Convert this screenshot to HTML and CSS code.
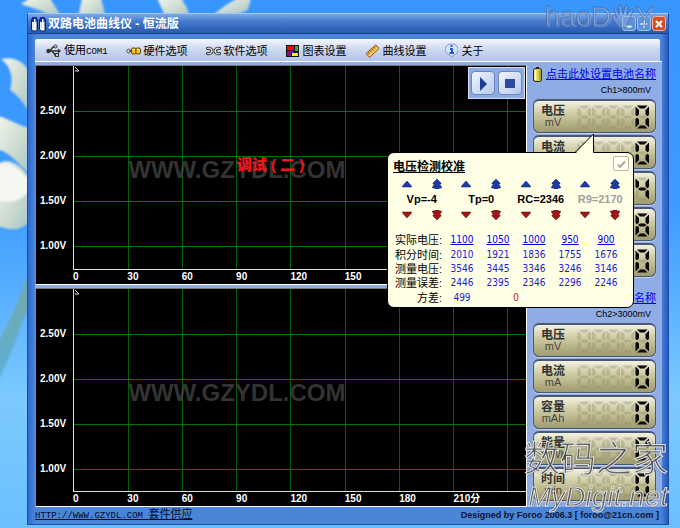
FILE: index.html
```html
<!DOCTYPE html>
<html lang="zh-CN">
<head>
<meta charset="utf-8">
<title>双路电池曲线仪 - 恒流版</title>
<link rel="stylesheet" href="styles.css">
</head>
<body>
<svg width="0" height="0" class="defs" aria-hidden="true">
  <defs>
    <path id="sa" d="M2 0.500H12.500L9.500 3.500H5Z"/>
    <path id="sb" d="M14 1.500V10L12.500 11.300L10.500 9.500V5Z"/>
    <path id="sc" d="M14 22.500V14L12.500 12.700L10.500 14.500V19Z"/>
    <path id="sd" d="M2 23.500H12.500L9.500 20.500H5Z"/>
    <path id="se" d="M0.500 22.500V14L2 12.700L4 14.500V19Z"/>
    <path id="sf" d="M0.500 1.500V10L2 11.300L4 9.500V5Z"/>
    <path id="sg" d="M3 12L5 10.500H9.500L11.500 12L9.500 13.500H5Z"/>
    <g id="d0"><use href="#sa"/><use href="#sb"/><use href="#sc"/><use href="#sd"/><use href="#se"/><use href="#sf"/></g>
    <g id="d4"><use href="#sf"/><use href="#sg"/><use href="#sb"/><use href="#sc"/></g>
    <g id="d8"><use href="#d0"/><use href="#sg"/></g>
    <g id="ghost" class="ghost"><use href="#d8"/><use href="#d8" x="14.500"/><use href="#d8" x="29"/><use href="#d8" x="43.500"/><use href="#d8" x="58"/></g>
    <path id="up1" d="M5 2L9.500 7V8H0.500V7Z"/>
    <path id="up2" d="M5 0L9 4V5H7.500L9.500 8V9H7V10H3V9H0.500V8L2.500 5H1V4Z"/>
    <linearGradient id="stem" x1="0" y1="0" x2="0" y2="1"><stop offset="0" stop-color="#7fa98c"/><stop offset="1" stop-color="#55a9d0"/></linearGradient>
    <linearGradient id="petal" x1="0" y1="0" x2="1" y2="1"><stop offset="0" stop-color="#f2f5ea"/><stop offset=".6" stop-color="#c9d9d0"/><stop offset="1" stop-color="#a4c3c8"/></linearGradient>
    <filter id="soft"><feGaussianBlur stdDeviation="1"/></filter>
  </defs>
</svg>

<div class="desktop">
  <svg class="wallpaper" viewBox="0 0 680 528" preserveAspectRatio="xMinYMin slice" aria-hidden="true">
    <g filter="url(#soft)">
      <path fill="url(#stem)" opacity=".8" d="M30 268C20 300 8 325 -4 345V385C12 355 22 320 32 300Z"/>
      <g fill="url(#petal)">
        <path d="M21 4L30 -2H50L61 16H50C42 10 32 8 21 4Z"/>
        <path d="M82 -2H101L106 18H78Z"/>
        <path d="M157 -2H181L187 8L190 18H166Z"/>
        <path d="M214 14L226 5L238 -2H251L248 10L238 14Z"/>
        <path d="M1 59C14 56 25 62 29 72V112C22 100 16 94 10 90C14 76 10 66 1 59Z"/>
        <path d="M-2 116C8 118 18 126 30 128V174C20 166 8 150 -2 150Z"/>
        <path d="M-2 164C8 156 22 166 30 178V222C18 232 8 230 -2 226Z"/>
      </g>
      <path fill="#f5f7f2" d="M-2 166C8 160 20 170 29 180V190C22 202 8 204 -2 200Z"/>
    </g>
  </svg>

  <main class="window">
    <header class="titlebar">
      <svg width="16" height="16" viewBox="0 0 16 16" aria-hidden="true">
        <rect x=".5" y="2" width="6" height="13" rx="2" fill="#dfe9f2" stroke="#0b1d72"/><rect x="1" y="1" width="5" height="5" rx="1" fill="#12289c"/><path d="M3 3h1.500v11H3z" fill="#fff"/><path d="M5 6h1v8H5z" fill="#8b9cab"/>
        <rect x="8.500" y="2" width="6" height="13" rx="2" fill="#dfe9f2" stroke="#0b1d72"/><rect x="9" y="1" width="5" height="5" rx="1" fill="#12289c"/><path d="M11 3h1.500v11H11z" fill="#fff"/><path d="M13 6h1v8h-1z" fill="#8b9cab"/>
      </svg>
      <h1>双路电池曲线仪 - 恒流版</h1>
      <div class="controls">
        <button type="button" aria-label="_"><svg viewBox="0 0 14 14"><path d="M3 10H10" stroke="#fff" stroke-width="2"/></svg></button>
        <button type="button" aria-label="+"><svg viewBox="0 0 14 14"><path d="M3 7H11M7 3V11" stroke="#fff" stroke-width="2"/></svg></button>
        <button type="button" class="close" aria-label="×"><svg viewBox="0 0 14 14"><path d="M3.500 3.500L10.500 10.500M10.500 3.500L3.500 10.500" stroke="#fff" stroke-width="2.200"/></svg></button>
      </div>
    </header>

    <nav class="menu">
      <button type="button"><svg width="15" height="14" viewBox="0 0 15 14"><g fill="none" stroke="#333" stroke-width="1.300"><path d="M2 7H13M4 7L7 3H9M6 7L9 11H11"/></g><circle cx="2.500" cy="7" r="2.200" fill="#333"/><circle cx="9.500" cy="2.500" r="1.500" fill="#ccc" stroke="#333"/><rect x="9.500" y="9.500" width="3" height="3" fill="#ccc" stroke="#333"/><path d="M12 4.500L15 7L12 9.500Z" fill="#333"/></svg><span>使用<span class="mono">COM1</span></span></button>
      <button type="button"><svg width="15" height="14" viewBox="0 0 15 14"><path d="M4.500 7C4.500 4.500 .8 4.500 .8 7C.8 9.500 4.500 9.500 4.500 7Z" fill="#ddd" stroke="#444"/><path d="M3.500 7H6" stroke="#444" stroke-width="2"/><rect x="5.500" y="4" width="4.500" height="6" rx="1.500" fill="#ffc21a" stroke="#5a4300"/><rect x="10" y="4" width="4.500" height="6" rx="1.500" fill="#ffc21a" stroke="#5a4300"/><path d="M7 5.500H9M11 5.500H13" stroke="#fff29a"/></svg>硬件选项</button>
      <button type="button"><svg width="15" height="14" viewBox="0 0 15 14"><g fill="none" stroke-linecap="round"><path d="M1.500 4.500C4.500 3.500 6 5.500 5.500 7C6 8.500 4.500 10.500 1.500 9.500M13.500 4.500C10.500 3.500 9 5.500 9.500 7C9 8.500 10.500 10.500 13.500 9.500M5 7H10" stroke="#333" stroke-width="3"/><path d="M1.500 4.500C4.500 3.500 6 5.500 5.500 7C6 8.500 4.500 10.500 1.500 9.500M13.500 4.500C10.500 3.500 9 5.500 9.500 7C9 8.500 10.500 10.500 13.500 9.500M5 7H10" stroke="#e4e4e4" stroke-width="1.200"/></g></svg>软件选项</button>
      <button type="button" class="icon-s"><svg width="13" height="14" viewBox="0 0 13 14"><path fill="#111" d="M0 1H13V13H0Z"/><path fill="#f00" d="M1 2H8V6H1Z"/><path fill="#2b2" d="M9 2H12V7H9Z"/><path fill="#817" d="M1 7H5V12H1Z"/><path fill="#fe1" d="M6 9H12V12H6Z"/><path fill="#22f" d="M5 6H8V9H5Z"/></svg>图表设置</button>
      <button type="button"><svg width="15" height="14" viewBox="0 0 15 14"><path d="M1 9.500L11 .8L14 4.500L4.500 13.500Z" fill="#efb44c" stroke="#94600f"/><path d="M3 8L4.500 10M5 6.200L6 7.800M7 4.500L8.500 6.500M9 2.800L10 4.300" stroke="#94600f"/><path d="M4 12L13 4" stroke="#ffe29a"/></svg>曲线设置</button>
      <button type="button" class="icon-s"><svg width="13" height="15" viewBox="0 0 13 15"><path d="M6.500 1A5.500 5.500 0 0 1 8.500 12L6.500 14.500L5 12A5.500 5.500 0 0 1 6.500 1Z" fill="#cfe3fb" stroke="#7e9cc9"/><path d="M5 6H7V10M4.500 10H9M5.500 3H7.500" fill="none" stroke="#0a32c0" stroke-width="1.600"/></svg>关于</button>
    </nav>

    <div class="work">
      <div class="charts">
        <section class="chart">
          <div class="volts"><span>2.50V</span><span>2.00V</span><span>1.50V</span><span>1.00V</span></div>
          <div class="plot">
            <svg class="grid" aria-hidden="true"><g class="v"><line x1="12%" x2="12%" y2="100%"/><line x1="24%" x2="24%" y2="100%"/><line x1="36%" x2="36%" y2="100%"/><line x1="48%" x2="48%" y2="100%"/><line x1="60%" x2="60%" y2="100%"/><line x1="72%" x2="72%" y2="100%"/><line x1="84%" x2="84%" y2="100%"/><line x1="96%" x2="96%" y2="100%"/></g><g class="h"><line x2="100%" y1="45" y2="45"/><line x2="100%" y1="90" y2="90"/><line x2="100%" y1="135" y2="135"/><line x2="100%" y1="180" y2="180"/></g><path class="tip" d="M1 1L5 5H1"/></svg>
            <span class="mark">WWW.GZYDL.COM</span>
            <strong class="stage">调试 ( 二 )</strong>
            <div class="transport">
              <button type="button" aria-label="▶"><svg viewBox="0 0 22 24"><path d="M8 5L15 12L8 19Z" fill="#1d3f93"/></svg></button>
              <button type="button" aria-label="■"><svg viewBox="0 0 22 24"><path d="M6 7H16V16H6Z" fill="#2b4c9c"/></svg></button>
            </div>
          </div>
          <div class="minutes"><span>0</span><span>30</span><span>60</span><span>90</span><span>120</span><span>150</span><span>180</span><span>210分</span></div>
        </section>
        <section class="chart">
          <div class="volts"><span>2.50V</span><span>2.00V</span><span>1.50V</span><span>1.00V</span></div>
          <div class="plot">
            <svg class="grid" aria-hidden="true"><g class="v"><line x1="12%" x2="12%" y2="100%"/><line x1="24%" x2="24%" y2="100%"/><line x1="36%" x2="36%" y2="100%"/><line x1="48%" x2="48%" y2="100%"/><line x1="60%" x2="60%" y2="100%"/><line x1="72%" x2="72%" y2="100%"/><line x1="84%" x2="84%" y2="100%"/><line x1="96%" x2="96%" y2="100%"/></g><g class="h"><line x2="100%" y1="45" y2="45"/><line x2="100%" y1="90" y2="90"/><line x2="100%" y1="135" y2="135"/><line x2="100%" y1="180" y2="180"/></g><path class="tip" d="M1 1L5 5H1"/></svg>
            <span class="mark">WWW.GZYDL.COM</span>
          </div>
          <div class="minutes"><span>0</span><span>30</span><span>60</span><span>90</span><span>120</span><span>150</span><span>180</span><span>210分</span></div>
        </section>
      </div>

      <aside class="channels">
        <section class="channel">
          <div class="name"><svg width="9" height="15" viewBox="0 0 9 15" aria-hidden="true"><path d="M3 0H6V2H3Z" fill="#222"/><rect x=".5" y="1.500" width="8" height="13" rx="2" fill="#d8cf45" stroke="#222"/><path d="M2.500 3V13" stroke="#fffbd0" stroke-width="2"/><path d="M7 3V13" stroke="#86801c"/></svg><a href="#ch1">点击此处设置电池名称</a></div>
          <p class="range">Ch1&gt;800mV</p>
          <div class="gauge"><div><b>电压</b><span>mV</span></div><svg class="lcd" viewBox="0 0 73 24"><use href="#ghost"/><use href="#d0" x="58"/></svg></div>
          <div class="gauge"><div><b>电流</b><span>mA</span></div><svg class="lcd" viewBox="0 0 73 24"><use href="#ghost"/><use href="#d0" x="58"/></svg></div>
          <div class="gauge"><div><b>容量</b><span>mAh</span></div><svg class="lcd" viewBox="0 0 73 24"><use href="#ghost"/><use href="#d4" x="58"/></svg></div>
          <div class="gauge"><div><b>能量</b><span>mWh</span></div><svg class="lcd" viewBox="0 0 73 24"><use href="#ghost"/><use href="#d8" x="58"/></svg></div>
          <div class="gauge"><div><b>时间</b><span>min</span></div><svg class="lcd" viewBox="0 0 73 24"><use href="#ghost"/><use href="#d0" x="58"/></svg></div>
          <form class="popup">
            <svg class="tail" width="20" height="20" viewBox="0 0 20 20" aria-hidden="true"><path d="M1 20L18.500 1V20Z" fill="#ffffe6"/><path d="M0 19.500L18.500 1V19.500" fill="none" stroke="#000"/></svg>
            <div class="head"><h2>电压检测校准</h2><button type="button" class="ok" aria-label="✓"><svg viewBox="0 0 14 14"><path d="M4 7.500L6 10L11 4.500" fill="none" stroke="#b3a895" stroke-width="2"/></svg></button></div>
            <div class="tune">
              <div class="knob"><button type="button" aria-label="Vp ▲"><svg><use href="#up1"/></svg></button><button type="button" aria-label="Vp ▲▲"><svg><use href="#up2"/></svg></button><output>Vp=-4</output><button type="button" class="down" aria-label="Vp ▼"><svg><use href="#up1"/></svg></button><button type="button" class="down" aria-label="Vp ▼▼"><svg><use href="#up2"/></svg></button></div>
              <div class="knob"><button type="button" aria-label="Tp ▲"><svg><use href="#up1"/></svg></button><button type="button" aria-label="Tp ▲▲"><svg><use href="#up2"/></svg></button><output>Tp=0</output><button type="button" class="down" aria-label="Tp ▼"><svg><use href="#up1"/></svg></button><button type="button" class="down" aria-label="Tp ▼▼"><svg><use href="#up2"/></svg></button></div>
              <div class="knob"><button type="button" aria-label="RC ▲"><svg><use href="#up1"/></svg></button><button type="button" aria-label="RC ▲▲"><svg><use href="#up2"/></svg></button><output>RC=2346</output><button type="button" class="down" aria-label="RC ▼"><svg><use href="#up1"/></svg></button><button type="button" class="down" aria-label="RC ▼▼"><svg><use href="#up2"/></svg></button></div>
              <div class="knob"><button type="button" aria-label="R9 ▲"><svg><use href="#up1"/></svg></button><button type="button" aria-label="R9 ▲▲"><svg><use href="#up2"/></svg></button><output class="off">R9=2170</output><button type="button" class="down" aria-label="R9 ▼"><svg><use href="#up1"/></svg></button><button type="button" class="down" aria-label="R9 ▼▼"><svg><use href="#up2"/></svg></button></div>
            </div>
            <table>
              <tr><th scope="row">实际电压:</th><td><a href="#v1100">1100</a></td><td><a href="#v1050">1050</a></td><td><a href="#v1000">1000</a></td><td><a href="#v950">950</a></td><td><a href="#v900">900</a></td></tr>
              <tr><th scope="row">积分时间:</th><td>2010</td><td>1921</td><td>1836</td><td>1755</td><td>1676</td></tr>
              <tr><th scope="row">测量电压:</th><td>3546</td><td>3445</td><td>3346</td><td>3246</td><td>3146</td></tr>
              <tr><th scope="row">测量误差:</th><td>2446</td><td>2395</td><td>2346</td><td>2296</td><td>2246</td></tr>
              <tr><th scope="row">方差:</th><td>499</td><td colspan="2" class="zero">0</td><td colspan="2"></td></tr>
            </table>
          </form>
        </section>
        <section class="channel">
          <div class="name"><a href="#ch2">点击此处设置电池名称</a></div>
          <p class="range">Ch2&gt;3000mV</p>
          <div class="gauge"><div><b>电压</b><span>mV</span></div><svg class="lcd" viewBox="0 0 73 24"><use href="#ghost"/><use href="#d0" x="58"/></svg></div>
          <div class="gauge"><div><b>电流</b><span>mA</span></div><svg class="lcd" viewBox="0 0 73 24"><use href="#ghost"/><use href="#d0" x="58"/></svg></div>
          <div class="gauge"><div><b>容量</b><span>mAh</span></div><svg class="lcd" viewBox="0 0 73 24"><use href="#ghost"/><use href="#d0" x="58"/></svg></div>
          <div class="gauge"><div><b>能量</b><span>mWh</span></div><svg class="lcd" viewBox="0 0 73 24"><use href="#ghost"/><use href="#d0" x="58"/></svg></div>
          <div class="gauge"><div><b>时间</b><span>min</span></div><svg class="lcd" viewBox="0 0 73 24"><use href="#ghost"/><use href="#d0" x="58"/></svg></div>
        </section>
      </aside>
    </div>

    <footer class="status">
      <a href="#site" class="mono">HTTP://WWW.GZYDL.COM <span>套件供应</span></a>
      <span class="credit">Designed by Foroo 2006.3 [ foroo@21cn.com ]</span>
    </footer>
  </main>

  <div class="stamp top"><span>haoD</span><svg width="24" height="26" viewBox="0 0 24 26"><path d="M8 24C5 19 1 15 1 12C3 10 5 13 6 14L3 5C4 3 6 4 6 6L8 11L8 2C9 0 11 1 11 3L12 10L14 2C15 1 17 1 17 3L16 11L20 5C22 4 23 6 22 7L18 17L15 24Z"/></svg><span>Y</span></div>
  <div class="stamp site"><span class="cn">数码之家</span><span class="en">MyDigit.net</span></div>
</div>
</body>
</html>
```
FILE: styles.css
```css
* { box-sizing: border-box; }
body {
  margin: 0;
  font: 11px/14px "Liberation Sans", "Noto Sans CJK SC", sans-serif;
  color: #000;
}
h1, h2, p { margin: 0; }
button {
  padding: 0;
  border: 0;
  background: none;
  font: inherit;
  color: inherit;
}
svg { display: block; flex: none; }
a { color: #0000ee; }
.defs { position: absolute; }

.desktop {
  position: relative;
  min-height: 100vh;
  padding: 13px 11px 3px 27px;
  background: linear-gradient(#3795fe, #3d9cff 40%, #7cc9ff 75%, #6cc0fd);
  overflow: hidden;
  display: flex;
}
.wallpaper {
  position: absolute;
  inset: 0;
  width: 100%;
  height: 100%;
}

.window {
  position: relative;
  flex: 1;
  display: flex;
  flex-direction: column;
  min-width: 0;
  padding: 0 5px 1px 7px;
  border: 1px solid #1d4cae;
  border-top-color: #a9c6f3;
  background: linear-gradient(90deg, #2f69d0, #4a85d8 7px, #4a85d8 calc(100% - 7px), #2559bf);
}
.titlebar {
  display: flex;
  align-items: center;
  gap: 1px;
  height: 20px;
  margin: 0 -5px 5px -7px;
  padding: 0 2px 0 3px;
  border-bottom: 1px solid #173f92;
  background: linear-gradient(#7ba9e8, #4a7fd0 35%, #2f63bb 80%, #2c5cb0);
}
.titlebar h1 {
  flex: 1;
  font-size: 12px;
  line-height: 16px;
  color: #fff;
}
.controls { display: flex; gap: 1px; }
.controls button {
  width: 14px;
  height: 15px;
  border: 1px solid #9fc0ee;
  border-radius: 3px;
  background: #5f93d8;
}
.controls .close { background: #d4502a; border-color: #f0b09a; }

.menu {
  display: flex;
  align-items: center;
  height: 22px;
  margin-right: 3px;
  padding-left: 11px;
  gap: 18px;
  border-top: 1px solid #fff;
  border-radius: 2px 2px 0 0;
  background: linear-gradient(#f1f4fc, #cdd8f1 45%, #b3c4e8);
}
.menu button {
  display: flex;
  align-items: center;
  gap: 3px;
}
.menu .icon-s { gap: 4px; }
.mono { font-family: "Liberation Mono", "Noto Sans CJK SC", monospace; font-size: 9px; }
.mono span { font-size: 11px; }

.work {
  flex: 1;
  display: flex;
  margin-right: 1px;
  padding-top: 3px;
  border-top: 1px solid #fff;
  background: #8fade4;
}
.charts {
  flex: 1;
  min-width: 0;
  display: flex;
  flex-direction: column;
  gap: 3px;
}
.chart {
  flex: 1;
  display: grid;
  grid-template: 1fr 14px / 37px 1fr;
  border: 1px solid #fff;
  border-top: 1px solid #777;
  border-left-color: #888;
  background: #000;
  color: #fff;
  font-size: 10px;
  font-weight: bold;
}
.volts {
  display: flex;
  flex-direction: column;
  padding: 22px 0 0 4px;
}
.volts span { height: 45px; line-height: 45px; }
.plot {
  position: relative;
  border-left: 1px solid #ddd;
  border-bottom: 1px solid #ddd;
}
.grid { width: 100%; height: 100%; position: absolute; }
.grid line { stroke: #007600; shape-rendering: crispEdges; }
.grid .v line { stroke: #006400; }
.tip { fill: none; stroke: #ddd; }
.mark {
  position: absolute;
  left: 12%;
  top: 90px;
  font-size: 24px;
  line-height: 28px;
  color: rgba(72, 72, 72, .72);
}
.stage {
  position: absolute;
  left: 36%;
  top: 89px;
  font-size: 15px;
  line-height: 20px;
  color: #f5141c;
}
.minutes {
  grid-column: 2;
  display: flex;
}
.minutes span { flex: 0 0 12%; white-space: nowrap; }
.transport {
  position: absolute;
  top: 1px;
  right: 1px;
  display: flex;
  gap: 3px;
  padding: 3px 2px;
  border: 1px solid #d5e0f6;
  background: #8eabe2;
}
.transport button {
  width: 24px;
  height: 24px;
  border: 1px solid #6d87bd;
  border-radius: 4px;
  background: linear-gradient(135deg, #f2f6fd, #b4c8ee);
}

.channels {
  flex: 0 0 135px;
}
.channel {
  position: relative;
  padding: 2px 6px 10px;
}
.channel:last-child { padding-bottom: 0; }
.name {
  display: flex;
  justify-content: flex-end;
  gap: 4px;
  height: 16px;
}
.range {
  padding-right: 5px;
  margin-bottom: 2px;
  text-align: right;
  font-size: 9px;
  line-height: 14px;
}
.gauge {
  display: flex;
  align-items: center;
  justify-content: space-between;
  height: 34px;
  margin-bottom: 2px;
  padding: 0 5px 0 7px;
  border: 1px solid #4b5570;
  border-top: 2px solid #4a5676;
  border-radius: 6px;
  background: linear-gradient(#f3f2df, #cfcca6 40%, #b8b486 70%, #9f9b72);
  box-shadow: 0 1px 1px #c3d2f0;
}
.gauge b, .gauge span { display: block; line-height: 11px; }
.gauge b { font-size: 12px; font-weight: bold; color: #333; }
.gauge span { color: #444; text-align: center; }
.lcd { width: 73px; height: 24px; fill: #080808; }
.ghost { fill: #8d8b68; opacity: .35; }

.popup {
  position: absolute;
  z-index: 2;
  top: 87px;
  right: 28px;
  width: 247px;
  padding: 3px 4px 2px 5px;
  border: 1px solid #000;
  border-radius: 7px;
  background: #ffffe6;
}
.tail { position: absolute; right: 38px; top: -20px; }
.head { display: flex; justify-content: space-between; align-items: flex-start; height: 20px; }
.head h2 {
  padding-top: 3px;
  font-size: 12px;
  line-height: 16px;
  text-decoration: underline;
}
.ok {
  width: 16px;
  height: 15px;
  border: 1px solid #bdb5a4;
  border-radius: 2px;
  background: #fffff4;
}
.tune { display: grid; grid-template-columns: repeat(4, 1fr); margin: 3px -1px 13px -1px; }
.knob { display: grid; grid-template-columns: 1fr 1fr; justify-items: center; }
.knob svg { width: 10px; height: 10px; fill: #1c3aa8; stroke: #102060; stroke-width: .5; }
.knob .down svg { transform: scaleY(-1); fill: #a31616; stroke: #4a0808; }
.knob output {
  grid-column: 1 / 3;
  font-weight: bold;
  line-height: 21px;
}
.knob .off { color: #a0a0a0; }
.popup table {
  width: 231px;
  height: 72px;
  table-layout: fixed;
  border-collapse: collapse;
}
.popup th {
  width: 51px;
  padding: 0 2px 0 0;
  font-weight: normal;
  text-align: right;
  line-height: 14px;
  white-space: nowrap;
}
.popup td {
  padding: 0;
  text-align: center;
  font: 10px/14px "DejaVu Sans Condensed", sans-serif;
  color: #2020d8;
}
.popup .zero { color: #e01010; }

.status {
  display: flex;
  justify-content: space-between;
  align-items: center;
  height: 16px;
}
.status a { color: #000a2a; }
.credit { padding-right: 4px; font-size: 9px; font-weight: bold; color: #0a1430; }

.stamp {
  position: absolute;
  z-index: 3;
  pointer-events: none;
  color: rgba(150, 180, 225, .35);
  -webkit-text-stroke: 1px rgba(70, 95, 145, .6);
  text-shadow: 1px 1px 1px rgba(160, 190, 235, .5);
}
.stamp.top {
  top: 0;
  right: 26px;
  display: flex;
  align-items: center;
  font-size: 28px;
  line-height: 34px;
}
.stamp svg { fill: rgba(150, 180, 225, .35); stroke: rgba(70, 95, 145, .7); }
.stamp.site {
  right: 12px;
  bottom: 14px;
  display: flex;
  flex-direction: column;
  align-items: flex-end;
  color: rgba(130, 130, 130, .45);
  -webkit-text-stroke: 1px rgba(250, 250, 250, .85);
  text-shadow: 0 0 2px rgba(0, 0, 0, .8);
}
.cn { font-size: 36px; line-height: 40px; }
.en { font: italic 28px/34px "Liberation Sans", sans-serif; }
```
